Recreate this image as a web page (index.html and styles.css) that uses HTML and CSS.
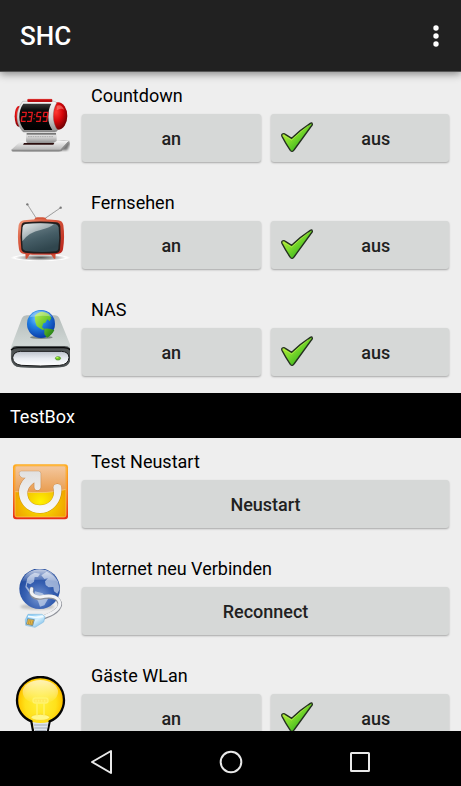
FILE: index.html
```html
<!DOCTYPE html>
<html lang="de">
<head>
<meta charset="utf-8">
<meta name="viewport" content="width=device-width, initial-scale=1">
<title>SHC</title>
<link rel="stylesheet" href="styles.css">
</head>
<body>
<svg class="defs" aria-hidden="true">
  <defs>
    <linearGradient id="checkFill" x1="0" y1="0" x2="1" y2="1">
      <stop offset="0.1" stop-color="#c4f03a"/><stop offset="0.45" stop-color="#7edb2c"/><stop offset="0.8" stop-color="#2fae1c"/>
    </linearGradient>
    <symbol id="check" viewBox="33 36 96 96">
      <path d="M37 72Q42 69 46 73L65 85Q90 60 121 40Q126 37 127 42Q128 45 122 51L72 120Q67 128 61 121Q48 102 36 79Q34 74 37 72Z" fill="url(#checkFill)" stroke="#24301f" stroke-width="4" stroke-linejoin="round"/>
      <path d="M41 76L65 90Q87 68 115 47" fill="none" stroke="#d3f55a" stroke-width="2" opacity=".7"/>
    </symbol>
  </defs>
</svg>

<header class="app-bar">
  <h1 class="app-title">SHC</h1>
  <button class="overflow" type="button" aria-label="Menü">
    <svg width="6" height="22" viewBox="0 0 6 22" fill="#fff"><circle cx="3" cy="3" r="2.7"/><circle cx="3" cy="11" r="2.7"/><circle cx="3" cy="19" r="2.7"/></svg>
  </button>
</header>

<main class="content">
  <section class="device">
    <svg class="device-icon" viewBox="30 33 180 180" aria-hidden="true">
      <defs>
        <linearGradient id="clockRim" x1="0" y1="0" x2="0" y2="1"><stop offset="0" stop-color="#f4f4f4"/><stop offset=".5" stop-color="#d5d5d5"/><stop offset="1" stop-color="#8d8d8d"/></linearGradient>
        <radialGradient id="clockRed" cx=".4" cy=".35" r=".7"><stop offset="0" stop-color="#ff3b33"/><stop offset=".5" stop-color="#d5060a"/><stop offset="1" stop-color="#650003"/></radialGradient>
        <linearGradient id="clockBase" x1="0" y1="0" x2="0" y2="1"><stop offset="0" stop-color="#f5f5f5"/><stop offset="1" stop-color="#aaa"/></linearGradient>
        <linearGradient id="clockFace" x1="0" y1="0" x2="0" y2="1"><stop offset="0" stop-color="#383838"/><stop offset=".25" stop-color="#0b0b0b"/><stop offset="1" stop-color="#000"/></linearGradient>
        <filter id="soft"><feGaussianBlur stdDeviation="3"/></filter>
      </defs>
      <path d="M60 198L202 196L212 172L190 168Z" fill="#000" opacity=".5" filter="url(#soft)"/>
      <path d="M34 194L62 168H206L183 194Q182 200 176 200H38Q33 199 34 194Z" fill="url(#clockBase)"/>
      <path d="M34 194H181L206 168L206 174L184 199H38Z" fill="#8a8a8a"/>
      <path d="M78 138H170V168L160 174H82Q78 172 78 166Z" fill="url(#clockRim)"/>
      <path d="M80 144H168V149H80Z" fill="#444" opacity=".7"/>
      <path d="M84 155H160" stroke="#aaa" stroke-width="3" stroke-dasharray="5 2"/>
      <path d="M72 174H163L160 179H69Z" fill="#2a0c0c"/>
      <ellipse cx="56" cy="94" rx="12" ry="31" fill="url(#clockRed)"/>
      <ellipse cx="174" cy="93" rx="28" ry="41" fill="url(#clockRed)"/>
      <path d="M170 62Q185 56 192 74Q182 68 170 76Z" fill="#ff9a90" opacity=".5"/>
      <path d="M68 49H162Q168 49 170 54C156 76 156 114 173 135Q170 141 164 141H70C56 126 51 113 51 96S57 63 68 49Z" fill="url(#clockRim)" stroke="#777" stroke-width="1"/>
      <path d="M70 56H154C147 67 145 81 145 97S149 123 157 135H73C63 123 58 111 58 96S62 66 70 56Z" fill="url(#clockFace)"/>
      <rect x="82" y="42" width="75" height="9" rx="3" fill="#b80b10"/>
      <path d="M84 43H155" stroke="#ef453f" stroke-width="2"/>
      <g fill="none" stroke="#e0191d" stroke-width="4" stroke-linejoin="round">
        <path d="M66 82H79L77 95H66L64 109H77M84 82H97L95 95H86M95 95L93 109H81M124 82H112L110 95H122L120 109H108M142 95H130L132 82H144L140 109H128"/>
        <path d="M104 88V91M102 100V103"/>
      </g>
    </svg>
    <div class="device-body">
      <h2 class="device-name">Countdown</h2>
      <div class="actions">
        <button class="action" type="button"><span class="action-text">an</span></button>
        <button class="action" type="button"><svg class="check" aria-hidden="true"><use href="#check"/></svg><span class="action-text">aus</span></button>
      </div>
    </div>
  </section>

  <section class="device">
    <svg class="device-icon" viewBox="30 39 180 180" aria-hidden="true">
      <defs>
        <linearGradient id="tvBody" x1="0" y1="0" x2="1" y2="1"><stop offset="0" stop-color="#f0997b"/><stop offset=".35" stop-color="#d85b40"/><stop offset="1" stop-color="#b82018"/></linearGradient>
        <linearGradient id="tvScreen" x1="0" y1="0" x2=".4" y2="1"><stop offset="0" stop-color="#788b92"/><stop offset=".6" stop-color="#455d66"/><stop offset="1" stop-color="#30464e"/></linearGradient>
        <linearGradient id="tvGlare" x1="0" y1="0" x2="1" y2="1"><stop offset="0" stop-color="#fff" stop-opacity=".8"/><stop offset="1" stop-color="#fff" stop-opacity=".12"/></linearGradient>
        <radialGradient id="tvShadow"><stop offset="0" stop-color="#555"/><stop offset=".6" stop-color="#c5c5c5"/><stop offset=".85" stop-color="#fff"/><stop offset="1" stop-color="#fff" stop-opacity="0"/></radialGradient>
      </defs>
      <ellipse cx="121" cy="203" rx="91" ry="11" fill="url(#tvShadow)"/>
      <g stroke="#929292" stroke-width="3" stroke-linecap="round"><path d="M82 43L109 85"/><path d="M182 53L134 86"/></g>
      <g stroke="#ddd" stroke-width="1"><path d="M84 46L109 84"/><path d="M179 54L134 84"/></g>
      <circle cx="82" cy="43" r="3.5" fill="#777"/><circle cx="182" cy="53" r="3.5" fill="#777"/>
      <path d="M103 88Q106 81 114 82H129Q137 82 140 88V93H103Z" fill="#d3563a"/>
      <path d="M76 188L90 192L81 206H77ZM152 192L167 188L166 206H162Z" fill="#d25137"/>
      <path d="M72 91Q122 84 174 91Q187 92 190 105Q195 142 189 178Q187 190 175 191Q123 198 70 191Q59 190 57 178Q51 141 56 105Q59 93 72 91Z" fill="url(#tvBody)"/>
      <path d="M75 97Q122 92 168 97Q178 97 181 108Q184 144 180 178Q179 188 170 189Q122 193 75 188Q66 187 64 178Q59 142 64 108Q65 98 75 97Z" fill="#231d1d"/>
      <path d="M77 102Q122 97 166 102Q173 103 176 112Q180 144 175 176Q174 183 167 184Q122 188 77 183Q70 182 68 175Q64 142 68 111Q69 103 77 102Z" fill="url(#tvScreen)"/>
      <path d="M77 102Q122 97 162 102Q151 113 124 119Q84 127 67 154Q65 132 68 111Q69 103 77 102Z" fill="url(#tvGlare)"/>
    </svg>
    <div class="device-body">
      <h2 class="device-name">Fernsehen</h2>
      <div class="actions">
        <button class="action" type="button"><span class="action-text">an</span></button>
        <button class="action" type="button"><svg class="check" aria-hidden="true"><use href="#check"/></svg><span class="action-text">aus</span></button>
      </div>
    </div>
  </section>

  <section class="device">
    <svg class="device-icon" viewBox="30 42 180 180" aria-hidden="true">
      <defs>
        <linearGradient id="nasTop" x1="0" y1="0" x2="0" y2="1"><stop offset="0" stop-color="#b4bcba"/><stop offset=".55" stop-color="#d0d7d5"/><stop offset="1" stop-color="#a0a8a7"/></linearGradient>
        <linearGradient id="nasFront" x1="0" y1="0" x2="0" y2="1"><stop offset="0" stop-color="#bcc2cb"/><stop offset=".5" stop-color="#e9edf2"/><stop offset="1" stop-color="#fff"/></linearGradient>
        <radialGradient id="nasGlobe" cx=".38" cy=".3" r=".75"><stop offset="0" stop-color="#7fd0ff"/><stop offset=".4" stop-color="#2383e6"/><stop offset="1" stop-color="#0634a2"/></radialGradient>
        <linearGradient id="nasLand" x1="0" y1="0" x2="1" y2="1"><stop offset="0" stop-color="#bdf052"/><stop offset=".5" stop-color="#69c52b"/><stop offset="1" stop-color="#156f12"/></linearGradient>
      </defs>
      <path d="M66 66Q70 58 80 58H164Q174 58 178 67L210 145Q214 165 212 185Q211 213 180 214Q121 217 62 214Q36 212 33 188Q31 165 35 148Z" fill="url(#nasTop)"/>
      <path d="M34 160Q38 149 52 150H193Q208 150 212 160V187Q209 213 180 214Q121 218 62 214Q36 212 33 188Z" fill="#4d5253"/>
      <path d="M33 162Q40 155 54 155H191Q205 155 212 163" fill="none" stroke="#080909" stroke-width="4"/>
      <path d="M61 166H184Q207 167 207 185Q205 206 179 208Q121 212 65 208Q39 205 38 185Q40 167 61 166Z" fill="url(#nasFront)" stroke="#17191a" stroke-width="3"/>
      <ellipse cx="174" cy="187" rx="8" ry="5" fill="#68c61d" stroke="#438415" stroke-width="2"/>
      <ellipse cx="172" cy="185" rx="4" ry="2" fill="#beff56"/>
      <ellipse cx="124" cy="124" rx="34" ry="5" fill="#4c5657" opacity=".6"/>
      <circle cx="123" cy="84" r="42" fill="url(#nasGlobe)"/>
      <path d="M104 60Q112 49 126 47Q137 48 146 54L154 66L149 76L142 70L136 80L130 82L126 94L133 99L129 103L118 96L110 90L106 78ZM133 98Q150 96 163 102Q157 117 141 125L133 115Z" fill="url(#nasLand)"/>
      <path d="M89 64Q100 44 122 44Q145 44 157 62Q124 56 89 64Z" fill="#fff" opacity=".3"/>
    </svg>
    <div class="device-body">
      <h2 class="device-name">NAS</h2>
      <div class="actions">
        <button class="action" type="button"><span class="action-text">an</span></button>
        <button class="action" type="button"><svg class="check" aria-hidden="true"><use href="#check"/></svg><span class="action-text">aus</span></button>
      </div>
    </div>
  </section>

  <h2 class="group-title">TestBox</h2>

  <section class="device">
    <svg class="device-icon" viewBox="30 36 180 180" aria-hidden="true">
      <defs>
        <linearGradient id="resetEdge" x1="0" y1="0" x2="0" y2="1"><stop offset="0" stop-color="#ffad24"/><stop offset=".5" stop-color="#f57c20"/><stop offset="1" stop-color="#e72d15"/></linearGradient>
        <radialGradient id="resetFill" cx=".5" cy=".7" r=".65"><stop offset="0" stop-color="#fff200"/><stop offset=".4" stop-color="#f5ca00"/><stop offset="1" stop-color="#ed9100"/></radialGradient>
        <linearGradient id="resetGloss" x1="0" y1="0" x2="0" y2="1"><stop offset="0" stop-color="#f4c79d"/><stop offset="1" stop-color="#e99c4e"/></linearGradient>
        <linearGradient id="resetArrow" x1="0" y1="0" x2="0" y2="1"><stop offset="0" stop-color="#e1e1e1"/><stop offset="1" stop-color="#fafafa"/></linearGradient>
        <path id="resetShape" d="M58 68Q59 64 64 64H116Q122 64 122 70V112Q121 121 112 121Q104 121 103 112V97C90 106 82 117 82 130C82 152 98 166 120 166C145 166 162 149 162 127L160 112Q161 102 172 102Q183 102 184 112C188 152 160 189 120 189C85 189 57 162 57 126C57 108 65 93 77 83H68Q57 80 58 68Z"/>
      </defs>
      <rect x="39" y="43" width="165" height="165" rx="9" fill="url(#resetEdge)"/>
      <rect x="45" y="48" width="153" height="153" rx="6" fill="url(#resetFill)" stroke="#ffce63" stroke-width="2"/>
      <path d="M46 54Q46 49 51 49H192Q197 49 197 54V118Q160 132 46 125Z" fill="url(#resetGloss)"/>
      <path d="M46 125Q155 133 197 118" fill="none" stroke="#f8cf91" stroke-width="2"/>
      <use href="#resetShape" fill="none" stroke="#a06424" stroke-width="3" opacity=".55"/>
      <use href="#resetShape" fill="url(#resetArrow)"/>
    </svg>
    <div class="device-body">
      <h2 class="device-name">Test Neustart</h2>
      <div class="actions">
        <button class="action" type="button"><span class="action-text">Neustart</span></button>
      </div>
    </div>
  </section>

  <section class="device">
    <svg class="device-icon" viewBox="30 42 180 180" aria-hidden="true">
      <defs>
        <radialGradient id="netGlobe" cx=".48" cy=".7" r=".75"><stop offset="0" stop-color="#7898d2"/><stop offset=".45" stop-color="#3760b2"/><stop offset="1" stop-color="#123c91"/></radialGradient>
        <linearGradient id="netGloss" x1="0" y1="0" x2="0" y2="1"><stop offset="0" stop-color="#fff" stop-opacity=".75"/><stop offset="1" stop-color="#fff" stop-opacity=".05"/></linearGradient>
        <linearGradient id="netPlug" x1="0" y1="0" x2="1" y2="1"><stop offset="0" stop-color="#62b8f1"/><stop offset=".5" stop-color="#d6f1ff"/><stop offset="1" stop-color="#5ca9de"/></linearGradient>
      </defs>
      <ellipse cx="112" cy="155" rx="51" ry="9" fill="#777" opacity=".35" filter="url(#soft)"/>
      <circle cx="119" cy="101" r="61" fill="url(#netGlobe)"/>
      <path d="M82 70Q90 58 104 53L120 56L114 66L104 66L102 80L91 88L82 84L80 94L91 107L100 111L99 121L87 112L76 96ZM124 61L140 50Q162 59 174 79L179 103L172 116L162 109L160 96L146 97L137 90L135 79L144 70L133 72ZM105 109L128 115L144 132L133 151L120 155L114 138L101 124Z" fill="#c9d5eb" opacity=".7"/>
      <path d="M65 80Q79 44 119 43Q158 43 174 79Q122 69 65 80Z" fill="url(#netGloss)"/>
      <path d="M95 102C90 119 102 129 121 128C148 122 165 123 175 136C188 153 171 172 139 184L116 193" fill="none" stroke="#8e9199" stroke-width="13" stroke-linecap="round"/>
      <path d="M95 101C90 117 102 127 121 126C148 120 165 121 175 134C188 151 171 170 139 182L116 191" fill="none" stroke="#f2f3f5" stroke-width="9" stroke-linecap="round"/>
      <path d="M84 178L126 178L135 185L131 201L105 217L77 211L76 194Z" fill="url(#netPlug)" stroke="#84bde3" stroke-width="2"/>
      <path d="M83 191L103 194L98 212L79 208Z" fill="#e4b94e" stroke="#4e7998" stroke-width="2"/>
      <path d="M88 194L85 208M93 195L90 209M99 196L95 210" stroke="#987021" stroke-width="1.5"/>
      <path d="M84 184L108 187L130 184" fill="none" stroke="#f1fbff" stroke-width="5"/>
    </svg>
    <div class="device-body">
      <h2 class="device-name">Internet neu Verbinden</h2>
      <div class="actions">
        <button class="action" type="button"><span class="action-text">Reconnect</span></button>
      </div>
    </div>
  </section>

  <section class="device">
    <svg class="device-icon" viewBox="30 48 180 180" aria-hidden="true">
      <defs>
        <radialGradient id="bulbFill" cx=".5" cy=".45" r=".55"><stop offset="0" stop-color="#fff03c"/><stop offset=".6" stop-color="#ffe11a"/><stop offset=".82" stop-color="#ffc800"/><stop offset="1" stop-color="#ed8500"/></radialGradient>
        <linearGradient id="bulbGloss" x1="0" y1="0" x2="0" y2="1"><stop offset="0" stop-color="#fff" stop-opacity=".7"/><stop offset="1" stop-color="#fff" stop-opacity="0"/></linearGradient>
      </defs>
      <path d="M121 51C81 51 51 82 51 121C51 150 69 174 94 184L101 222H141L149 184C174 174 192 150 192 121C192 82 162 51 121 51Z" fill="url(#bulbFill)" stroke="#050505" stroke-width="7"/>
      <path d="M98 186Q121 192 146 186L139 222H104Z" fill="#dde4ed"/>
      <path d="M101 195H143M103 204H141M105 212H139" stroke="#a3abb6" stroke-width="3"/>
      <ellipse cx="121" cy="96" rx="53" ry="36" fill="url(#bulbGloss)"/>
      <ellipse cx="121" cy="172" rx="28" ry="9" fill="#fff788" stroke="#f5cf20" stroke-width="2"/>
      <g fill="none" stroke="#fff36e" stroke-width="4"><rect x="99" y="114" width="45" height="15" rx="7" fill="#ffe95c"/><path d="M111 130V169M132 130V169M108 119V125M116 119V125M125 119V125M134 119V125"/></g>
    </svg>
    <div class="device-body">
      <h2 class="device-name">Gäste WLan</h2>
      <div class="actions">
        <button class="action" type="button"><span class="action-text">an</span></button>
        <button class="action" type="button"><svg class="check" aria-hidden="true"><use href="#check"/></svg><span class="action-text">aus</span></button>
      </div>
    </div>
  </section>
</main>

<nav class="system-nav" aria-label="System">
  <button class="nav-button" type="button" aria-label="Zurück"><svg width="24" height="26" viewBox="0 0 24 26"><path d="M21 2V24L2 13Z"/></svg></button>
  <button class="nav-button" type="button" aria-label="Start"><svg width="24" height="26" viewBox="0 0 24 26"><circle cx="12" cy="13" r="10.3"/></svg></button>
  <button class="nav-button" type="button" aria-label="Übersicht"><svg width="24" height="26" viewBox="0 0 24 26"><rect x="3" y="4" width="18" height="18" rx="0.5"/></svg></button>
</nav>
</body>
</html>
```
FILE: styles.css
```css
* {
  box-sizing: border-box;
}

body {
  margin: 0;
  height: 100vh;
  display: flex;
  flex-direction: column;
  background: #eee;
  color: #000;
  font-family: Roboto, "Liberation Sans", sans-serif;
}

h1,
h2 {
  margin: 0;
}

button {
  border: 0;
  padding: 0;
  font: inherit;
}

.defs {
  position: absolute;
  width: 0;
  height: 0;
}

.app-bar {
  flex: none;
  z-index: 1;
  display: flex;
  align-items: center;
  justify-content: space-between;
  height: 72px;
  padding: 1px 15px 0 20px;
  background: #212121;
  border-bottom: 1px solid #555;
  box-shadow: 0 2px 8px rgba(0, 0, 0, 0.45);
}

.app-title {
  color: #fff;
  font-size: 26px;
  font-weight: 500;
  line-height: 32px;
}

.overflow {
  display: flex;
  justify-content: center;
  width: 20px;
  background: none;
}

.content {
  flex: 1;
  min-height: 0;
  overflow: hidden;
}

.device {
  display: flex;
  gap: 12px;
  padding: 12px 12px 17px 10px;
}

.device-icon {
  flex: none;
  width: 60px;
  height: 60px;
  margin-top: 12px;
}

.device-body {
  flex: 1;
  min-width: 0;
}

.device-name {
  padding-left: 9px;
  margin-bottom: 6px;
  font-size: 18px;
  font-weight: 400;
  line-height: 24px;
}

.actions {
  display: flex;
  gap: 10px;
}

.action {
  flex: 1;
  display: flex;
  align-items: center;
  height: 48px;
  padding: 0 10px;
  border-radius: 3px;
  background: #d6d8d7;
  box-shadow: 0 1px 2px rgba(0, 0, 0, 0.3);
  color: #212121;
  font-size: 18px;
  font-weight: 500;
}

.action-text {
  flex: 1;
  text-align: center;
}

.check {
  flex: none;
  width: 32px;
  height: 32px;
}

.group-title {
  padding: 2px 10px 0;
  background: #000;
  color: #fff;
  font-size: 18px;
  font-weight: 400;
  line-height: 43px;
}

.system-nav {
  flex: none;
  display: flex;
  justify-content: center;
  gap: 45px;
  height: 55px;
  padding: 7px 0 0 1px;
  background: #000;
}

.nav-button {
  display: flex;
  align-items: center;
  justify-content: center;
  width: 84px;
  background: none;
}

.nav-button svg {
  fill: none;
  stroke: #e8e8e8;
  stroke-width: 2;
  stroke-linejoin: round;
}
```
